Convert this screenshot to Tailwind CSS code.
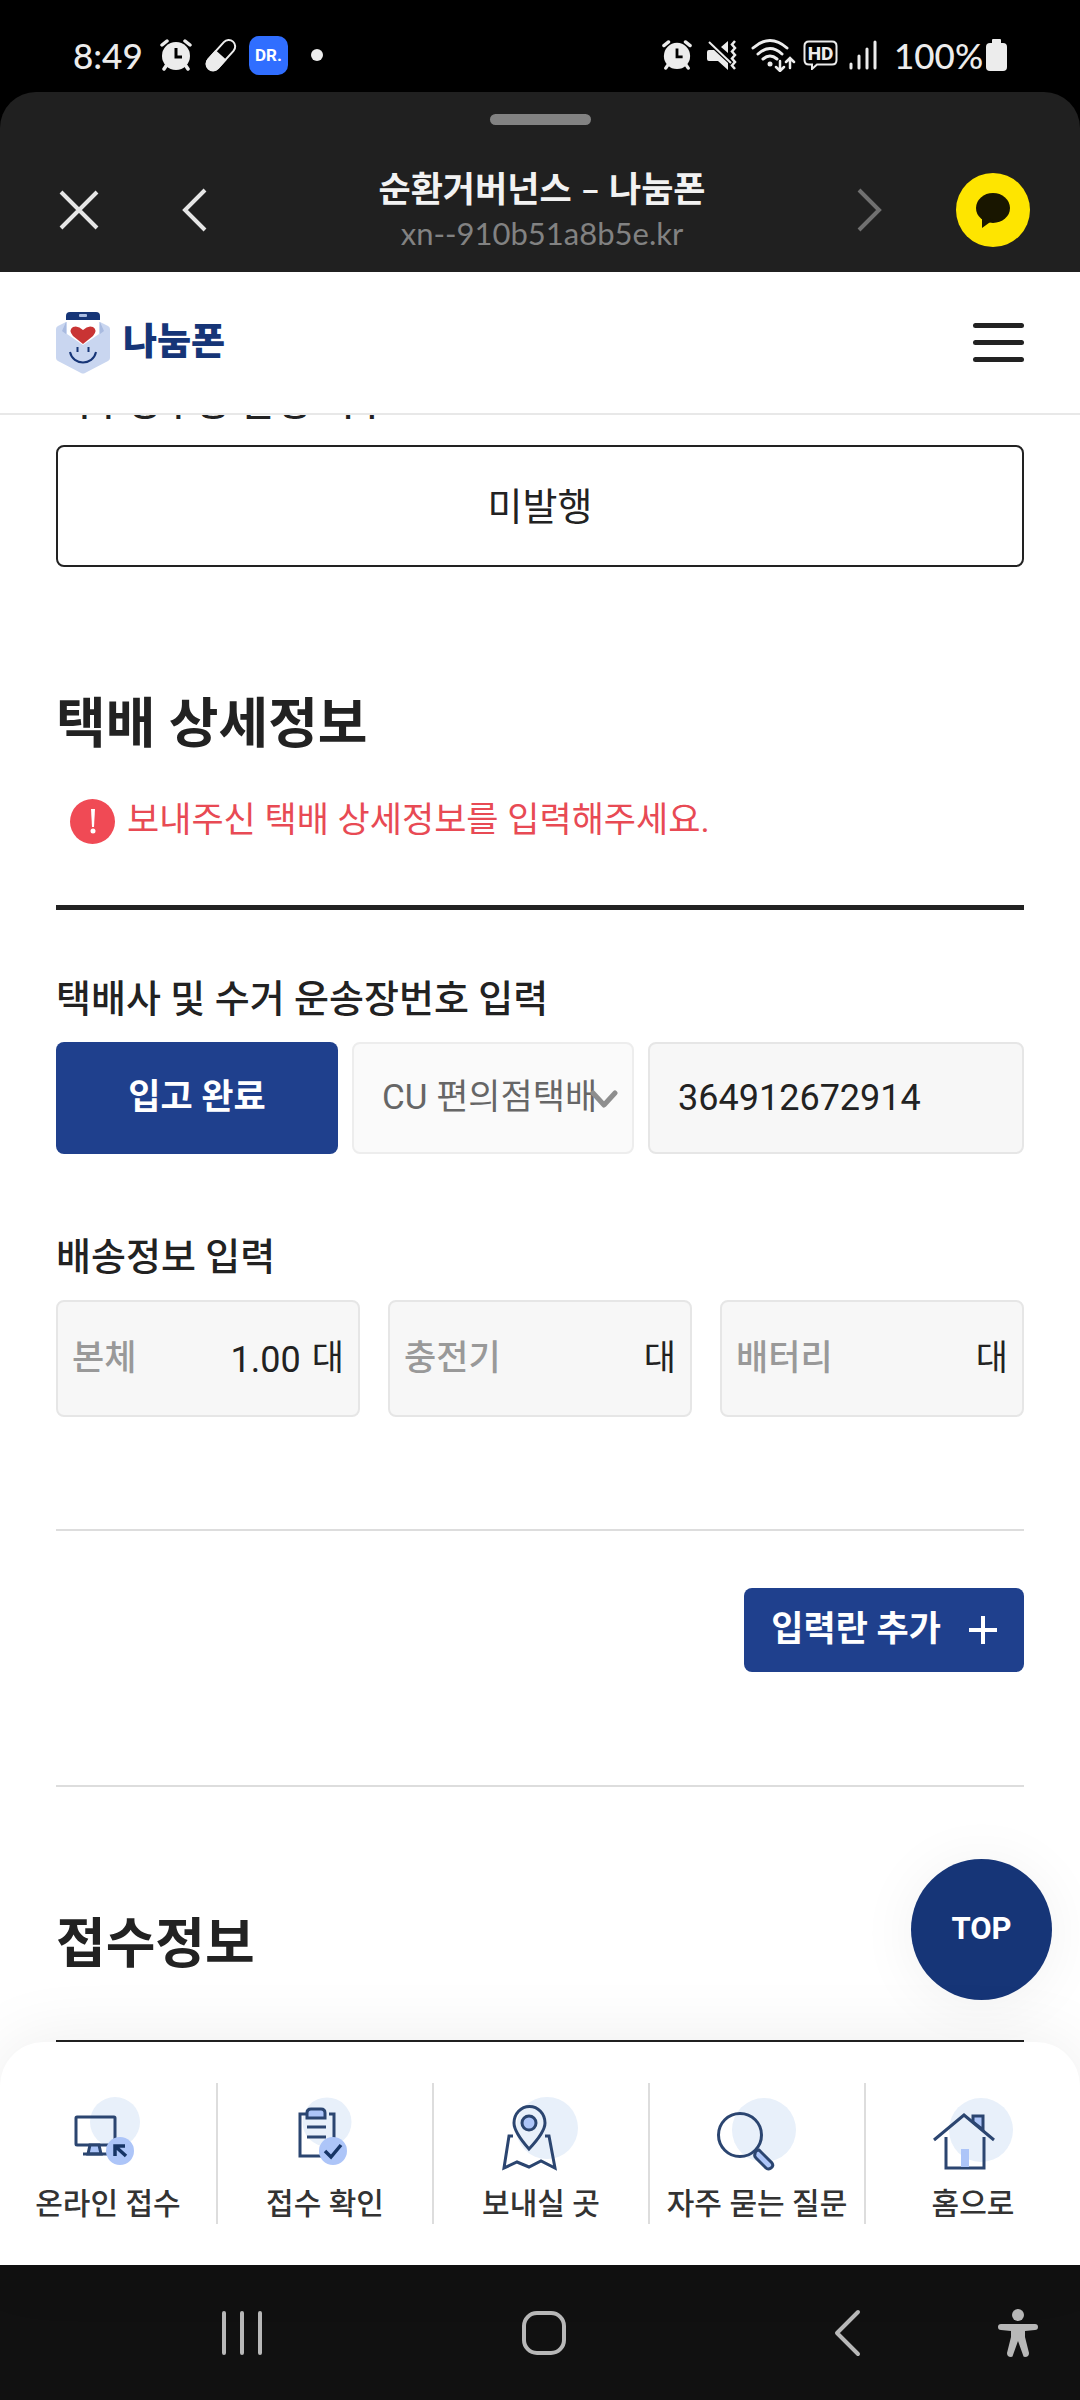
<!DOCTYPE html>
<html lang="ko">
<head>
<meta charset="utf-8">
<meta name="viewport" content="width=device-width, initial-scale=1">
<title>순환거버넌스 – 나눔폰</title>
<script src="https://cdn.jsdelivr.net/npm/@tailwindcss/browser@4"></script>
</head>
<body class="bg-black font-['Roboto','Noto_Sans_CJK_KR',sans-serif] text-[#222]">
<div class="flex h-screen flex-col overflow-hidden">

  <!-- Phone status bar -->
  <div class="flex h-[92px] shrink-0 items-center justify-between pt-[18px] pr-[73px] pl-[73px] text-[#ececec]">
    <div class="flex items-center">
      <span class="w-[87px] font-['Lato','Noto_Sans_CJK_KR',sans-serif] text-[35px] leading-10 font-medium">8:49</span>
      <svg class="h-8 w-8" viewBox="0 0 32 32" fill="none" stroke="currentColor" stroke-linecap="round"><circle cx="16" cy="17" r="14" fill="currentColor" stroke="none"/><path d="M2 6l5-4M30 6l-5-4" stroke-width="3.5"/><path d="M6 27l-2 3M26 27l2 3" stroke-width="3.5"/><path d="M16 9v9h6" stroke="#000" stroke-width="3" stroke-linecap="butt"/></svg>
      <svg class="ml-3 h-[34px] w-[34px]" viewBox="0 0 34 34"><g transform="rotate(42 17 17)"><rect x="10.500" y="-1" width="13" height="36" rx="6.500" fill="none" stroke="currentColor" stroke-width="2"/><path d="M9.500 17h15v12a7.500 7.500 0 0 1-15 0z" fill="currentColor"/></g></svg>
      <span class="ml-[11px] flex h-[39px] w-[39px] items-center justify-center rounded-[10px] bg-[#306eff] text-[17px] leading-none font-bold text-white">DR.</span>
      <span class="ml-[23px] h-3 w-3 rounded-full bg-[#ececec]"></span>
    </div>
    <div class="flex items-center">
      <svg class="h-[30px] w-[30px]" viewBox="0 0 32 32" fill="none" stroke="currentColor" stroke-linecap="round"><circle cx="16" cy="17" r="14" fill="currentColor" stroke="none"/><path d="M2 6l5-4M30 6l-5-4" stroke-width="3.500"/><path d="M6 27l-2 3M26 27l2 3" stroke-width="3.500"/><path d="M16 9v9h6" stroke="#000" stroke-width="3" stroke-linecap="butt"/></svg>
      <svg class="ml-[15px] h-[30px] w-[30px]" viewBox="0 0 30 30"><path d="M21 1v12l-7-6zM0 12q0-2 2-2h5l14 13v7l-10-9H2q-2 0-2-2z" fill="currentColor"/><path d="M2 2l22 21" stroke="currentColor" stroke-width="2"/><path d="M28 1l-3 3.500 3 3.500-3 3.500 3 3.500-3 3.500 3 3.500-3 3.500 3 3.500" fill="none" stroke="currentColor" stroke-width="2.500"/></svg>
      <svg class="ml-[14px] h-[34px] w-[45px]" viewBox="0 0 45 34" fill="none" stroke="currentColor" stroke-width="3" stroke-linecap="round"><path d="M2 10q17-15 34 0M7 16q12-11 24 0M12 21q7-6 14 0"/><circle cx="19" cy="26" r="2.500" fill="currentColor" stroke="none"/><path d="M29 23v9M25 29l4 4 4-4M39 30v-9M35 24l4-4 4 4" stroke-width="2.500"/></svg>
      <svg class="ml-[7px] h-[30px] w-[35px]" viewBox="0 0 35 30"><path d="M6 1.500h23q4.500 0 4.500 4.500v14q0 4.500-4.500 4.500H14l-5 4.500v-4.500H6Q1.500 24.500 1.500 20V6q0-4.500 4.500-4.500z" fill="none" stroke="currentColor" stroke-width="2"/><text x="17.500" y="20" text-anchor="middle" font-size="19" font-weight="800" fill="currentColor">HD</text></svg>
      <svg class="ml-[11px] h-[30px] w-[28px]" viewBox="0 0 28 30" stroke="currentColor" stroke-width="3" stroke-linecap="round"><path d="M2 24v4M10 16v12M18 9v19M26 2v26"/></svg>
      <span class="ml-[17px] w-[92px] font-['Lato','Noto_Sans_CJK_KR',sans-serif] text-[35px] leading-10 font-medium">100%</span>
      <svg class="h-8 w-[21px]" viewBox="0 0 21 32" fill="currentColor"><rect x="6" width="9" height="8" rx="1"/><rect y="4" width="21" height="28" rx="4"/></svg>
    </div>
  </div>

  <!-- In-app browser bar -->
  <div class="shrink-0 rounded-t-[36px] bg-[#202020] pt-[22px]">
    <div class="mx-auto h-[11px] w-[101px] rounded-full bg-[#828282]"></div>
    <div class="flex h-[147px] items-center pt-[23px] pr-[50px] pl-[59px]">
      <button aria-label="닫기" class="h-10 w-10 text-[#e6e6e6]"><svg viewBox="0 0 40 40" stroke="currentColor" stroke-width="4"><path d="M2 2l36 36M38 2L2 38"/></svg></button>
      <button aria-label="뒤로" class="ml-[82px] h-11 w-[26px] text-[#e6e6e6]"><svg viewBox="0 0 26 44" fill="none" stroke="currentColor" stroke-width="4"><path d="M24 2L4 22l20 20"/></svg></button>
      <div class="flex-1 pl-5 text-center font-['Lato','Noto_Sans_CJK_KR',sans-serif]">
        <h1 class="text-[35px] leading-[46px] font-bold text-[#f2f2f2]">순환거버넌스 – 나눔폰</h1>
        <p class="text-[31px] leading-[44px] text-[#828282]">xn--910b51a8b5e.kr</p>
      </div>
      <button aria-label="앞으로" class="mr-[73px] h-11 w-[26px] text-[#707070]"><svg viewBox="0 0 26 44" fill="none" stroke="currentColor" stroke-width="4"><path d="M2 2l20 20L2 42"/></svg></button>
      <button aria-label="카카오톡 공유" class="h-[74px] w-[74px]"><svg viewBox="0 0 74 74"><circle cx="37" cy="37" r="37" fill="#fee500"/><ellipse cx="37" cy="35" rx="17" ry="15" fill="#191600"/><path d="M26 43v12l11-8z" fill="#191600"/></svg></button>
    </div>
  </div>

  <!-- Site header -->
  <header class="z-10 flex h-[143px] shrink-0 items-center justify-between border-b-2 border-[#e8e8e8] bg-white px-14">
    <a href="#" class="flex items-center gap-[13px]">
      <svg class="h-[62px] w-[54px]" viewBox="0 0 54 62"><path d="M0 17Q0 15 2 14L10 10h34l8 4q2 1 2 3v29q0 2-2 3L29 61q-2 1-4 0L2 49q-2-1-2-3z" fill="#c9d6f0"/><path d="M10 10v12l-4-3zM44 10v12l4-3z" fill="#a9bbe0"/><path d="M11 7h32v15L27 33 11 22z" fill="#fff"/><path d="M10 8V4q0-4 4-4h26q4 0 4 4v4z" fill="#163577"/><rect x="23" y="2" width="8" height="3" rx="1" fill="#a9bbe0"/><path d="M27 32L17 24q-5-6 0-9 5-2 10 3 5-5 10-3 5 3 0 9z" fill="#c93434"/><path d="M14 40c3 14 23 14 26 0M21.500 35v5M32.500 35v5" fill="none" stroke="#163577" stroke-width="2"/></svg>
      <span class="text-[37px] leading-[44px] font-black text-[#163577]">나눔폰</span>
    </a>
    <button aria-label="메뉴 열기" class="flex h-[39px] w-[51px] flex-col justify-between">
      <span class="h-[5px] w-full rounded-full bg-[#222]"></span>
      <span class="h-[5px] w-full rounded-full bg-[#222]"></span>
      <span class="h-[5px] w-full rounded-full bg-[#222]"></span>
    </button>
  </header>

  <main class="relative min-h-0 flex-1 bg-white px-14">
    <h3 class="-mt-[37px] mb-[19px] text-[38px] leading-[48px] font-medium">기부영수증 발행 여부</h3>
    <button class="block h-[122px] w-full rounded-lg border-2 border-[#222] pt-[2px] text-[38px] leading-[48px]">미발행</button>

    <section>
      <h2 class="mt-[118px] text-[54px] leading-[80px] font-bold">택배 상세정보</h2>
      <p class="mt-[33px] flex h-[46px] items-center gap-3 pl-[14px] text-[35px] leading-[46px] text-[#e84a54]">
        <svg class="h-[45px] w-[45px]" viewBox="0 0 45 45"><circle cx="22.500" cy="22.500" r="22.500" fill="#f04a55"/><path d="M21 10h4l-1 18h-2z" fill="#fff"/><circle cx="23" cy="32" r="2.500" fill="#fff"/></svg>
        보내주신 택배 상세정보를 입력해주세요.
      </p>
      <div class="mt-[61px] border-t-[5px] border-[#222]"></div>

      <h3 class="mt-[65px] mb-[19px] text-[38px] leading-[48px] font-medium">택배사 및 수거 운송장번호 입력</h3>
      <div class="grid h-[112px] grid-cols-[3fr_3fr_4fr] gap-[14px] text-[35px]">
        <button class="rounded-lg bg-[#1f408d] font-bold text-white">입고 완료</button>
        <div class="relative min-w-0">
          <select aria-label="택배사" class="h-full w-full appearance-none rounded-lg border-2 border-[#ededed] bg-[#fafafa] pl-7 text-[#666]">
            <option>CU 편의점택배</option>
          </select>
          <svg class="pointer-events-none absolute top-12 right-4 h-[18px] w-7" viewBox="0 0 28 18" fill="none" stroke="#8e8e8e" stroke-width="5" stroke-linecap="round" stroke-linejoin="round"><path d="M3 3l11 12L25 3"/></svg>
        </div>
        <input aria-label="운송장번호" value="364912672914" class="min-w-0 rounded-lg border-2 border-[#e6e6e6] bg-[#f7f7f7] px-7 text-[36px]">
      </div>

      <h3 class="mt-[79px] mb-[19px] text-[38px] leading-[48px] font-medium">배송정보 입력</h3>
      <div class="grid h-[117px] grid-cols-3 gap-7 text-[35px]">
        <div class="flex items-center rounded-lg border-2 border-[#e6e6e6] bg-[#f7f7f7] px-[14px] pt-[2px]">
          <label for="body" class="shrink-0 font-medium text-[#999]">본체</label>
          <input id="body" value="1.00" class="w-full min-w-0 text-right text-[36px]">
          <span class="ml-[11px] shrink-0">대</span>
        </div>
        <div class="flex items-center rounded-lg border-2 border-[#e6e6e6] bg-[#f7f7f7] px-[14px] pt-[2px]">
          <label for="charger" class="shrink-0 font-medium text-[#999]">충전기</label>
          <input id="charger" value="" class="w-full min-w-0 text-right text-[36px]">
          <span class="ml-[11px] shrink-0">대</span>
        </div>
        <div class="flex items-center rounded-lg border-2 border-[#e6e6e6] bg-[#f7f7f7] px-[14px] pt-[2px]">
          <label for="battery" class="shrink-0 font-medium text-[#999]">배터리</label>
          <input id="battery" value="" class="w-full min-w-0 text-right text-[36px]">
          <span class="ml-[11px] shrink-0">대</span>
        </div>
      </div>

      <div class="mt-[112px] border-t-2 border-[#ddd]"></div>
      <div class="mt-[57px] flex justify-end">
        <button class="flex h-[84px] items-center gap-7 rounded-lg bg-[#1f408d] px-[27px] text-[35px] font-bold text-white">입력란 추가
          <svg class="h-7 w-7" viewBox="0 0 28 28" stroke="currentColor" stroke-width="4"><path d="M14 0v28M0 14h28"/></svg>
        </button>
      </div>
      <div class="mt-[113px] border-t-2 border-[#ddd]"></div>
    </section>

    <section>
      <h2 class="mt-[118px] text-[54px] leading-[80px] font-bold">접수정보</h2>
      <div class="mt-[55px] border-t-2 border-[#222]"></div>
    </section>

    <a href="#" class="absolute right-7 bottom-[42px] flex h-[141px] w-[141px] items-center justify-center rounded-full bg-[#163577] text-[31px] font-bold text-white shadow-[0_4px_60px_rgba(0,0,0,0.06)]">TOP</a>
  </main>

  <!-- Site tab bar -->
  <div class="shrink-0 bg-white">
  <nav class="relative grid h-[223px] grid-cols-5 items-center rounded-t-[44px] bg-white text-[30px] leading-10 font-medium text-[#333] shadow-[0_0_70px_rgba(0,0,0,0.08)]">
    <a href="#" class="flex h-[141px] flex-col items-center gap-[9px] pt-[14px]">
      <svg class="h-[78px] w-[84px] shrink-0" viewBox="0 0 84 78" fill="none" stroke="#2b4570" stroke-width="3"><circle cx="49" cy="25" r="25" fill="#e8f0fa" stroke="none"/><rect x="10" y="20" width="39" height="28" rx="1"/><path d="M24 48h9l2 9H22z" fill="#adc5f8"/><path d="M17 57h26"/><circle cx="54" cy="54" r="14" fill="#adc5f8" stroke="none"/><path d="M49 59V49h10M49 49l11 10" stroke="#163465" stroke-width="3.500"/></svg>
      <span>온라인 접수</span>
    </a>
    <a href="#" class="flex h-[141px] flex-col items-center gap-[9px] border-l-2 border-[#ddd] pt-[14px]">
      <svg class="h-[78px] w-[84px] shrink-0" viewBox="0 0 84 78" fill="none" stroke="#2b4570" stroke-width="3"><circle cx="44" cy="25" r="24.500" fill="#e8f0fa" stroke="none"/><path d="M23 17h-6v42h26M46 17h5v26"/><path d="M24 21v-5q0-4 4-4h10q4 0 4 4v5z" fill="#adc5f8"/><path d="M24 30h19M24 40h19"/><circle cx="50" cy="54" r="14" fill="#adc5f8" stroke="none"/><path d="M42 54l6 6 10-12" stroke="#163465" stroke-width="3.500"/></svg>
      <span>접수 확인</span>
    </a>
    <a href="#" class="flex h-[141px] flex-col items-center gap-[9px] border-l-2 border-[#ddd] pt-[14px]">
      <svg class="h-[78px] w-[84px] shrink-0" viewBox="0 0 84 78" fill="none" stroke="#2b4570" stroke-width="3"><circle cx="48" cy="31" r="31" fill="#e8f0fa" stroke="none"/><path d="M30 52Q15 35 15 26a15 16 0 0 1 31 0q0 9-16 26z"/><circle cx="30" cy="26" r="7" fill="#adc5f8"/><path d="M14 39h-4L5 71l13-6 12 5 12-6 14 7-6-32h-4"/></svg>
      <span>보내실 곳</span>
    </a>
    <a href="#" class="flex h-[141px] flex-col items-center gap-[9px] border-l-2 border-[#ddd] pt-[14px]">
      <svg class="h-[78px] w-[84px] shrink-0" viewBox="0 0 84 78" fill="none" stroke="#2b4570" stroke-width="3"><circle cx="49" cy="33" r="32" fill="#e8f0fa" stroke="none"/><circle cx="25" cy="38" r="21.500"/><path d="M40 57q0-4 4-4l13 13q2 3-1 5t-5 0L41 61q-2-2-1-4z" fill="#adc5f8"/></svg>
      <span>자주 묻는 질문</span>
    </a>
    <a href="#" class="flex h-[141px] flex-col items-center gap-[9px] border-l-2 border-[#ddd] pt-[14px]">
      <svg class="h-[78px] w-[84px] shrink-0" viewBox="0 0 84 78" fill="none" stroke="#2b4570" stroke-width="3"><circle cx="50" cy="33" r="32" fill="#e8f0fa" stroke="none"/><path d="M42 19V19h10v14l-10-8z" fill="#adc5f8"/><path d="M3 43l30-25 30 25M15 40v31h38V40"/><path d="M30 52h8v18h-8z" fill="#adc5f8" stroke="none"/></svg>
      <span>홈으로</span>
    </a>
  </nav>
  </div>

  <!-- System navigation -->
  <nav class="flex h-[135px] shrink-0 items-center justify-between bg-[#111] pr-[41px] pl-[220px] text-[#b8b8b8]">
    <button aria-label="최근 앱" class="h-12 w-11"><svg viewBox="0 0 44 48" stroke="currentColor" stroke-width="4" stroke-linecap="round"><path d="M4 4v40M22 4v40M40 4v40"/></svg></button>
    <button aria-label="홈" class="mr-[9px] h-12 w-12"><svg viewBox="0 0 48 48" fill="none" stroke="currentColor" stroke-width="4"><rect x="4" y="4" width="40" height="40" rx="13"/></svg></button>
    <div class="flex items-center">
      <button aria-label="이전" class="h-12 w-[28px]"><svg viewBox="0 0 28 48" fill="none" stroke="currentColor" stroke-width="4" stroke-linecap="round" stroke-linejoin="round"><path d="M25 3L4 24l21 21"/></svg></button>
      <button aria-label="접근성" class="ml-[136px] h-12 w-[42px]"><svg viewBox="0 0 42 48" fill="currentColor"><circle cx="21" cy="6" r="6"/><path d="M4 15h34q3 0 3 3 0 3-3 3l-10 1v6l4 16q0 4-4 4-2 0-2-2l-5-14-5 14q0 2-2 2-4 0-4-4l4-16v-6L4 21q-3 0-3-3 0-3 3-3z"/></svg></button>
    </div>
  </nav>
</div>
</body>
</html>
